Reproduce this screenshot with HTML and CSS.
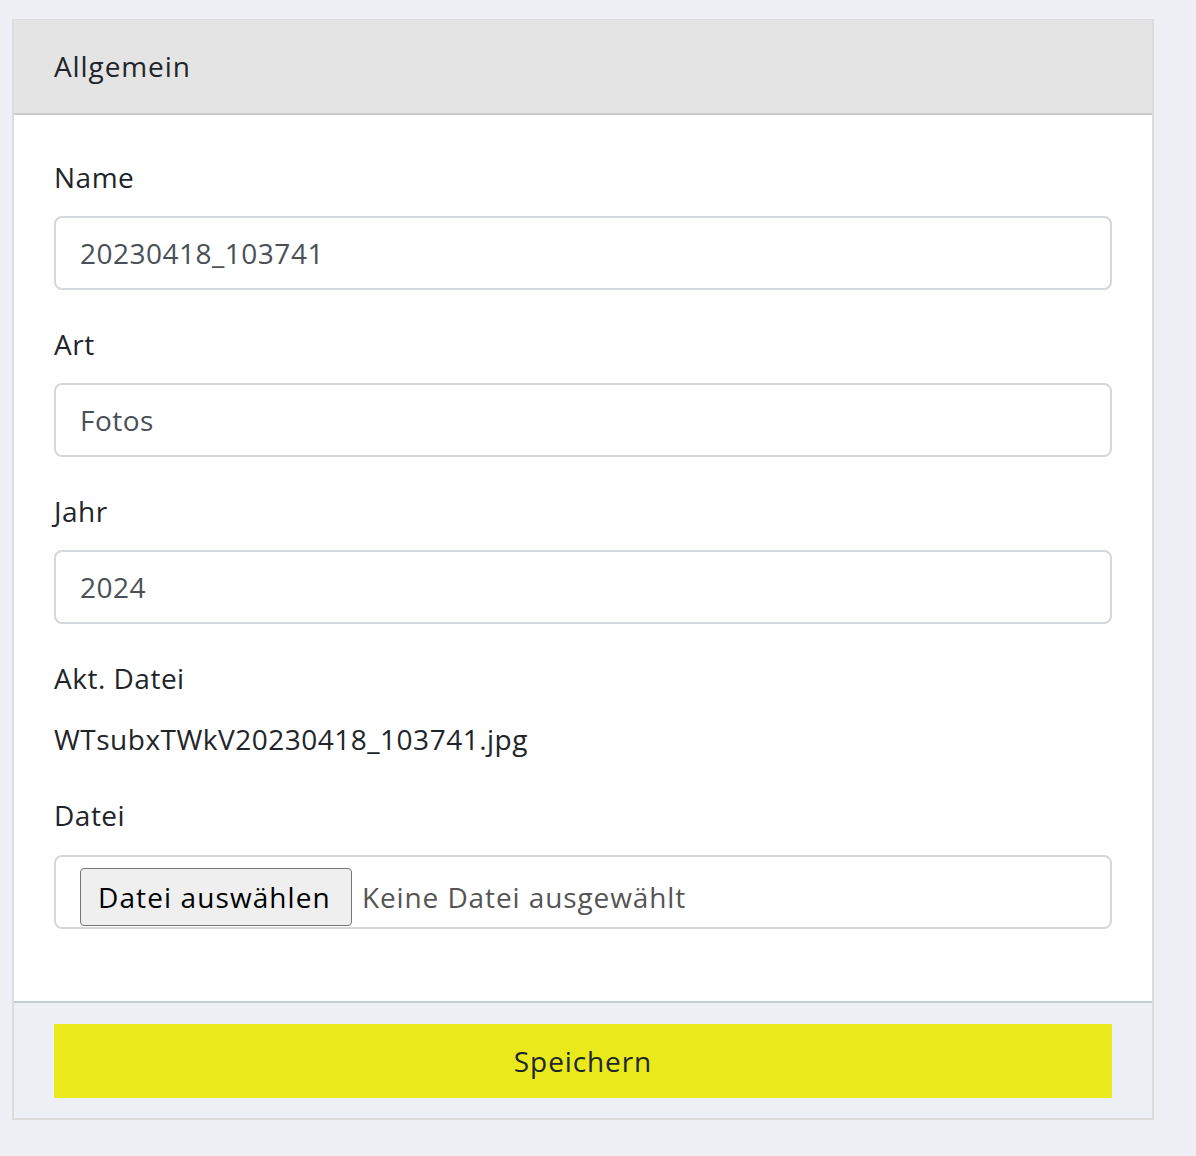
FILE: index.html
```html
<!DOCTYPE html>
<html lang="de">
<head>
<meta charset="utf-8">
<title>Allgemein</title>
<link rel="stylesheet" href="styles.css">
</head>
<body>
<div class="page">
  <div class="card">
    <div class="card-header">Allgemein</div>
    <div class="card-body">
      <div class="group">
        <div class="label">Name</div>
        <div class="input">20230418_103741</div>
      </div>
      <div class="group">
        <div class="label">Art</div>
        <div class="input">Fotos</div>
      </div>
      <div class="group">
        <div class="label">Jahr</div>
        <div class="input">2024</div>
      </div>
      <div class="group">
        <div class="label">Akt. Datei</div>
        <div class="value">WTsubxTWkV20230418_103741.jpg</div>
      </div>
      <div class="group last">
        <div class="label">Datei</div>
        <div class="input file">
          <span class="file-btn">Datei auswählen</span>
          <span class="file-name">Keine Datei ausgewählt</span>
        </div>
      </div>
    </div>
    <div class="card-footer">
      <div class="save">Speichern</div>
    </div>
  </div>
</div>
</body>
</html>
```

FILE: styles.css
```css
* { box-sizing: border-box; }
html, body {
  margin: 0;
  padding: 0;
  background: #eff0f5;
}
body {
  font-family: "Open Sans", "Liberation Sans", sans-serif;
  font-size: 28px;
  letter-spacing: 0.5px;
  color: #212529;
}
.page {
  padding: 19px 0 0 12px;
  width: 1154px;
}
.card {
  border: 2px solid #dcdcdc;
  border-top-width: 1px;
  background: #fff;
}
.card-header {
  background: #e4e4e4;
  border-bottom: 2px solid #cbcbcb;
  height: 95px;
  padding: 0 40px 2px;
  display: flex;
  align-items: center;
  letter-spacing: 0.9px;
}
.card-body {
  padding: 40px 40px 40px;
}
.group {
  margin-bottom: 32px;
}
.group.last { margin-bottom: 32px; }
.group.last .label { margin-bottom: 18px; }
.label {
  line-height: 44px;
  margin-bottom: 17px;
}
.value {
  line-height: 44px;
}
.input {
  height: 74px;
  border: 2px solid #d4d7dc;
  border-radius: 8px;
  padding: 0 24px;
  display: flex;
  align-items: center;
  color: #495057;
}
.input.file {
  align-items: flex-end;
  padding: 0 24px 1px;
}
.file-btn {
  height: 58px;
  display: flex;
  align-items: center;
  padding: 0 20px 0 17px;
  background: #efefef;
  border: 1px solid #767676;
  border-radius: 4px;
  color: #000;
  margin-right: 10px;
  letter-spacing: 1.1px;
}
.file-name {
  color: #555;
  line-height: 58px;
  letter-spacing: 0.9px;
}
.card-footer {
  background: #edf1f5;
  border-top: 2px solid #c3ced3;
  padding: 21px 40px 20px;
}
.save {
  height: 74px;
  background: #e9e91c;
  display: flex;
  align-items: center;
  justify-content: center;
  color: #212529;
  letter-spacing: 0.9px;
}
```
